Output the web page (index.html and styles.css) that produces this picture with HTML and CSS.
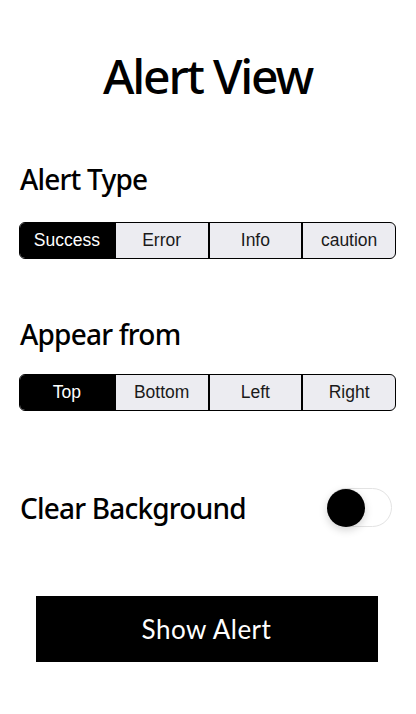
FILE: index.html
```html
<!DOCTYPE html>
<html>
<head>
<meta charset="utf-8">
<link rel="stylesheet" href="styles.css">
</head>
<body>
<main class="page">
  <h1 class="title">Alert View</h1>

  <h2 class="heading heading-type">Alert Type</h2>
  <div class="segmented seg-type">
    <div class="seg selected">Success</div>
    <div class="seg">Error</div>
    <div class="seg">Info</div>
    <div class="seg">caution</div>
  </div>

  <h2 class="heading heading-appear">Appear from</h2>
  <div class="segmented seg-appear">
    <div class="seg selected">Top</div>
    <div class="seg">Bottom</div>
    <div class="seg">Left</div>
    <div class="seg">Right</div>
  </div>

  <div class="toggle-row">
    <h2 class="heading">Clear Background</h2>
    <div class="toggle"><div class="knob"></div></div>
  </div>

  <div class="button-wrap">
    <button class="show-btn">Show Alert</button>
  </div>
</main>
</body>
</html>
```

FILE: styles.css
```css
html, body {
  margin: 0;
  padding: 0;
  background: #ffffff;
}

.page {
  display: flex;
  flex-direction: column;
  padding: 52px 20px 0 19px;
  color: #000;
  font-family: "Noto Sans", sans-serif;
}

.title {
  margin: 0;
  font-size: 48px;
  line-height: 48px;
  font-weight: 500;
  text-align: center;
  letter-spacing: -2.2px;
}

.heading {
  margin: 0;
  font-size: 28px;
  line-height: 28px;
  font-weight: 500;
  padding-left: 1px;
  letter-spacing: -0.8px;
}

.heading-type {
  margin-top: 65px;
}

.heading-appear {
  margin-top: 61px;
}

.segmented {
  display: grid;
  grid-template-columns: repeat(4, 1fr);
  height: 37px;
  box-sizing: border-box;
  border: 1.5px solid #000;
  border-radius: 6px;
  overflow: hidden;
  background: #ececf1;
}

.seg-type {
  margin-top: 29px;
}

.seg-appear {
  margin-top: 26px;
}

.seg {
  display: flex;
  align-items: center;
  justify-content: center;
  font-family: "Liberation Sans", Arial, sans-serif;
  font-size: 17.5px;
  color: #1a1a1a;
  border-left: 2px solid #000;
}

.seg:first-child {
  border-left: none;
}

.seg.selected {
  background: #000;
  color: #fff;
}

.toggle-row {
  display: flex;
  align-items: center;
  justify-content: space-between;
  margin-top: 77px;
  padding-right: 4px;
}

.toggle {
  width: 65px;
  height: 39px;
  box-sizing: border-box;
  border: 1.5px solid #e3e3e3;
  border-radius: 20px;
  background: #fff;
  display: flex;
  align-items: center;
}

.knob {
  width: 38px;
  height: 38px;
  border-radius: 50%;
  background: #000;
  box-shadow: 0 3px 8px rgba(0, 0, 0, 0.18);
  margin-left: -1px;
}

.button-wrap {
  display: flex;
  justify-content: center;
  margin-top: 69px;
}

.show-btn {
  width: 342px;
  height: 66px;
  border: none;
  background: #000;
  color: #fff;
  font-family: "Lato", sans-serif;
  font-size: 26px;
  font-weight: 400;
  letter-spacing: 0.5px;
  padding: 0;
  margin-left: -2px;
}
```
